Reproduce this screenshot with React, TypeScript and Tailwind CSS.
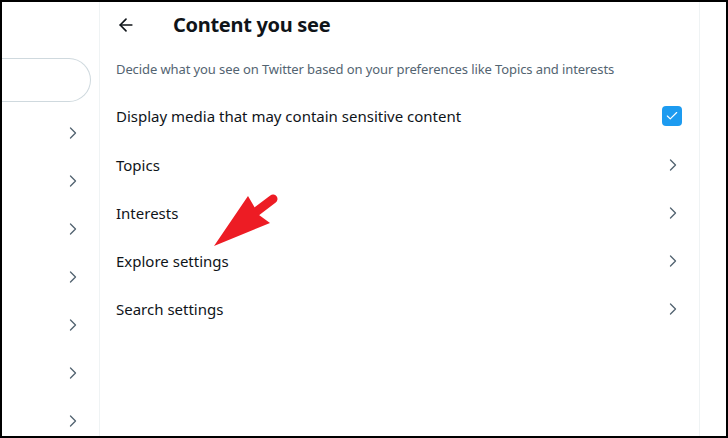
import React from 'react';
import { ChevronRight, ArrowLeft, Check } from 'lucide-react';

const rows = ['Topics', 'Interests', 'Explore settings', 'Search settings'];

const Chevron = ({ className = '' }: { className?: string }) => (
  <ChevronRight size={20} strokeWidth={1.6} className={`text-[#536471] ${className}`} />
);

export default function App() {
  return (
    <div className="relative w-[728px] h-[438px] border-2 border-black bg-white overflow-hidden font-['Noto_Sans',sans-serif] text-[#0f1419]">
      <div className="flex h-full">
        {/* left settings column, cut off */}
        <div className="w-[98px] h-full border-r border-[#eff3f4] flex flex-col overflow-hidden">
          <div className="h-[56px] shrink-0" />
          <div className="h-[44px] w-[89px] shrink-0 rounded-r-full border border-l-0 border-[#cfd9de]" />
          <div className="flex flex-col pt-[7px] shrink-0">
            {Array.from({ length: 7 }).map((_, i) => (
              <div key={i} className="h-[48px] shrink-0 flex items-center justify-end pr-[16px]">
                <Chevron />
              </div>
            ))}
          </div>
        </div>

        {/* content panel */}
        <div className="w-[600px] h-full border-r border-[#eff3f4] flex flex-col">
          <div className="h-[46px] flex items-center pl-[16px]">
            <ArrowLeft size={20} strokeWidth={2} className="text-[#0f1419]" />
            <h1 className="ml-[37px] text-[20px] font-bold leading-6 tracking-[-0.3px]">Content you see</h1>
          </div>
          <p className="px-[16px] pt-[13px] pb-[12px] text-[13px] leading-4 text-[#536471] tracking-[-0.1px]">
            Decide what you see on Twitter based on your preferences like Topics and interests
          </p>
          <div className="mt-[1px] h-[51px] pt-[1px] flex items-center justify-between px-[16px]">
            <span className="text-[15px]">Display media that may contain sensitive content</span>
            <span className="w-[20px] h-[20px] rounded-[4px] bg-[#1d9bf0] flex items-center justify-center mr-[1px]">
              <Check size={14} strokeWidth={2} className="text-white" />
            </span>
          </div>
          {rows.map((r) => (
            <div key={r} className="h-[48px] flex items-center justify-between pl-[16px] pr-[16px]">
              <span className="text-[15px]">{r}</span>
              <Chevron />
            </div>
          ))}
        </div>
        <div className="flex-1" />
      </div>

      {/* annotation arrow */}
      <svg className="absolute left-0 top-0 pointer-events-none" width="728" height="438" viewBox="0 0 728 438">
        <line x1="271" y1="197" x2="250" y2="213" stroke="#ed1c24" strokeWidth="9" strokeLinecap="round" />
        <polygon points="212,244 246,194 257,213 268,221" fill="#ed1c24" />
      </svg>
    </div>
  );
}
